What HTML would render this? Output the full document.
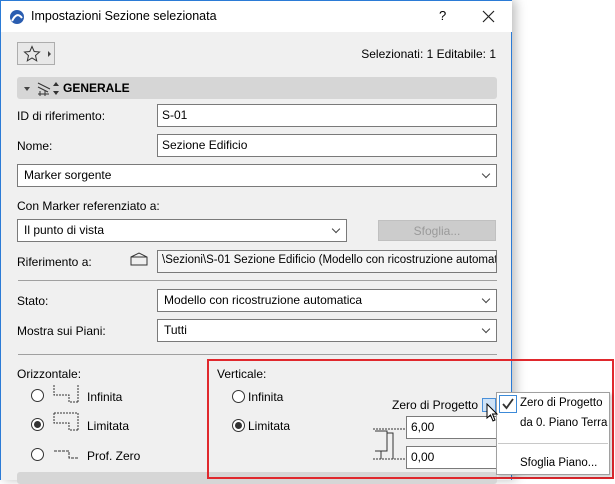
<!DOCTYPE html>
<html><head><meta charset="utf-8"><style>
*{box-sizing:border-box;margin:0;padding:0}
body{width:615px;height:480px;background:#fff;position:relative;overflow:hidden;font-family:"Liberation Sans",sans-serif;font-size:12px;color:#000}
.a{position:absolute;white-space:nowrap}
.win{position:absolute;left:0;top:0;width:512px;height:480px;background:#f0f0f0;border-left:1px solid #2b7bd6;border-right:1px solid #2b7bd6;border-top:1px solid #2b7bd6;box-shadow:4px 0 10px rgba(0,0,0,.25)}
.title{position:absolute;left:0;top:0;width:511px;height:31px;background:#fff}
.in{position:absolute;background:#fff;border:1px solid #7a7a7a;height:23px;padding:3px 0 0 4px;white-space:nowrap;overflow:hidden}
.sel{position:absolute;background:#fff;border:1px solid #7a7a7a;height:23px;padding:3px 0 0 6px;white-space:nowrap}
.sel:after{content:"";position:absolute;right:7px;top:6px;width:5px;height:5px;border-right:1px solid #444;border-bottom:1px solid #444;transform:rotate(45deg)}
.sep{position:absolute;left:17px;width:479px;height:1px;background:#a0a0a0}
.rad{position:absolute;width:13px;height:13px;border:1px solid #333;border-radius:50%;background:#fff}
.rad.on:after{content:"";position:absolute;left:2px;top:2px;width:7px;height:7px;border-radius:50%;background:#333}
</style></head><body>
<div class="win">
<div class="title"></div>
<svg class="a" style="left:8px;top:8px" width="16" height="16"><circle cx="8" cy="8" r="7" fill="#2a5db0"/><path d="M3 12 Q8 2 13 9" stroke="#fff" stroke-width="2" fill="none"/></svg>
<div class="a" style="left:30px;top:8px;font-size:12.5px">Impostazioni Sezione selezionata</div>
<div class="a" style="left:438px;top:7px;font-size:13px">?</div>
<svg class="a" style="left:481px;top:9px" width="13" height="13"><path d="M1 1L12 12M12 1L1 12" stroke="#222" stroke-width="1.2"/></svg>
<div class="a" style="left:16px;top:41px;width:38px;height:23px;border:1px solid #adadad;background:#e8e8e8"></div>
<svg class="a" style="left:22px;top:44px" width="30" height="18"><path d="M9 1.5L11.2 6.5L16.5 7L12.5 10.5L13.7 15.8L9 13L4.3 15.8L5.5 10.5L1.5 7L6.8 6.5Z" fill="none" stroke="#333"/><path d="M25 6L28 9L25 12Z" fill="#444"/></svg>
<div class="a" style="right:15px;top:46px">Selezionati: 1 Editabile: 1</div>
<div class="a" style="left:16px;top:76px;width:480px;height:22px;background:#d6d6d6;border-radius:3px"></div>
<svg class="a" style="left:21px;top:80px" width="40" height="16"><path d="M2 6L8 6L5 10Z" fill="#444"/><path d="M16 2L28 8M16 6L26 11M18 10V15M23 10V15M16 13H27" stroke="#333" fill="none"/><path d="M31 5L34 1L37 5ZM31 10L34 14L37 10Z" fill="#333"/></svg>
<div class="a" style="left:62px;top:80px;font-weight:bold">GENERALE</div>
<div class="a" style="left:16px;top:108px">ID di riferimento:</div>
<div class="in" style="left:156px;top:103px;width:340px">S-01</div>
<div class="a" style="left:16px;top:138px">Nome:</div>
<div class="in" style="left:156px;top:133px;width:340px">Sezione Edificio</div>
<div class="sel" style="left:16px;top:163px;width:480px">Marker sorgente</div>
<div class="a" style="left:16px;top:198px">Con Marker referenziato a:</div>
<div class="sel" style="left:16px;top:218px;width:330px">Il punto di vista</div>
<div class="a" style="left:377px;top:219px;width:118px;height:21px;background:#cccccc;border:1px solid #c0c0c0;color:#9a9a9a;text-align:center;padding-top:3px">Sfoglia...</div>
<div class="a" style="left:16px;top:254px">Riferimento a:</div>
<svg class="a" style="left:129px;top:251px" width="18" height="14"><path d="M1 5L9 1L17 5V13H1Z M1 5H17" fill="none" stroke="#333"/></svg>
<div class="in" style="left:156px;top:249px;width:340px;background:#f5f5f5;font-size:11.5px">\Sezioni\S-01 Sezione Edificio (Modello con ricostruzione automatica)</div>
<div class="sep" style="top:279px"></div>
<div class="a" style="left:16px;top:293px">Stato:</div>
<div class="sel" style="left:156px;top:288px;width:340px">Modello con ricostruzione automatica</div>
<div class="a" style="left:16px;top:323px">Mostra sui Piani:</div>
<div class="sel" style="left:156px;top:318px;width:340px">Tutti</div>
<div class="sep" style="top:353px"></div>
<div class="a" style="left:16px;top:366px">Orizzontale:</div>
<div class="rad" style="left:30px;top:388px"></div>
<div class="rad on" style="left:30px;top:417px"></div>
<div class="rad" style="left:30px;top:447px"></div>
<svg class="a" style="left:50px;top:382px" width="30" height="80"><g stroke="#333" fill="none"><path d="M3 2V12H18V19H27M27 2V19" stroke-dasharray="2 1"/><path d="M3 30V40H18V47H27M3 30H27V47" stroke-dasharray="2 1"/><path d="M3 68H18V75H27" stroke-dasharray="3 1"/></g></svg>
<div class="a" style="left:86px;top:389px">Infinita</div>
<div class="a" style="left:86px;top:418px">Limitata</div>
<div class="a" style="left:86px;top:448px">Prof. Zero</div>
<div class="a" style="left:216px;top:366px">Verticale:</div>
<div class="rad" style="left:231px;top:389px"></div>
<div class="rad on" style="left:231px;top:418px"></div>
<div class="a" style="left:247px;top:389px">Infinita</div>
<div class="a" style="left:247px;top:418px">Limitata</div>
<div class="a" style="left:391px;top:397px">Zero di Progetto</div>
<div class="a" style="left:481px;top:397px;width:14px;height:14px;background:#cfe3f7;border:1px solid #4a90d9"></div>
<svg class="a" style="left:370px;top:420px" width="36" height="52"><g stroke="#333" fill="none"><path d="M2 8H34M2 38H34" stroke-dasharray="2 1"/><path d="M4 10H16V30H4M16 12H22V38M10 30V38"/></g></svg>
<div class="in" style="left:405px;top:415px;width:100px">6,00</div>
<div class="in" style="left:405px;top:445px;width:100px">0,00</div>
<div class="a" style="left:16px;top:471px;width:480px;height:12px;background:#d6d6d6;border-radius:3px"></div>
</div>
<div class="a" style="left:207px;top:359px;width:407px;height:120px;border:2px solid #e0282d"></div>
<div class="a" style="left:496px;top:392px;width:114px;height:83px;background:#fff;border:1px solid #a0a0a0;box-shadow:2px 2px 3px rgba(0,0,0,.2)"></div>
<div class="a" style="left:499px;top:395px;width:18px;height:18px;border:1px solid #3c8ad8;background:#fff"></div>
<svg class="a" style="left:501px;top:397px" width="14" height="14"><path d="M2 7L5.5 11L12 2" stroke="#333" stroke-width="1.8" fill="none"/></svg>
<div class="a" style="left:520px;top:397px;font-size:11.5px">Zero di Progetto</div>
<div class="a" style="left:520px;top:417px;font-size:11.5px">da 0. Piano Terra</div>
<div class="a" style="left:498px;top:443px;width:110px;height:1px;background:#c8c8c8"></div>
<div class="a" style="left:520px;top:457px;font-size:11.5px">Sfoglia Piano...</div>
<svg class="a" style="left:486px;top:403px" width="14" height="20"><path d="M1 1V15L4.5 12L7 18L9 17L6.5 11H11Z" fill="#fff" stroke="#000"/></svg>
</body></html>
